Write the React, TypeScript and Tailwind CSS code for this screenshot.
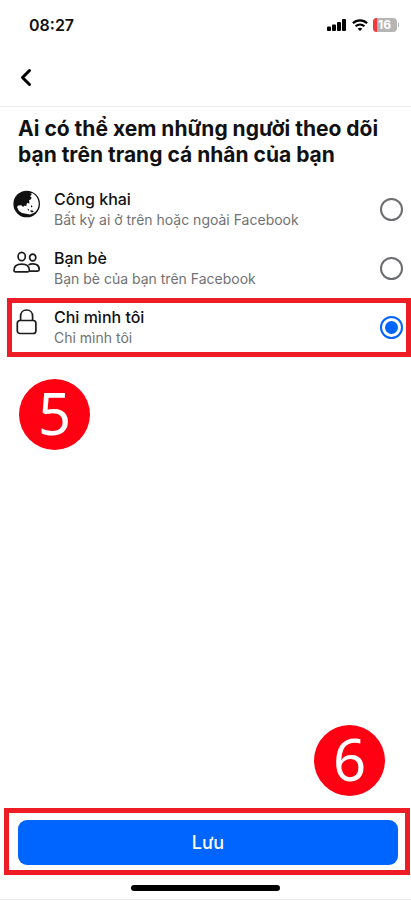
import React, { useState } from 'react';

const options = [
  {
    id: 'public',
    title: 'Công khai',
    description: 'Bất kỳ ai ở trên hoặc ngoài Facebook',
    icon: <GlobeIcon />,
  },
  {
    id: 'friends',
    title: 'Bạn bè',
    description: 'Bạn bè của bạn trên Facebook',
    icon: <FriendsIcon />,
  },
  {
    id: 'only-me',
    title: 'Chỉ mình tôi',
    description: 'Chỉ mình tôi',
    icon: <LockIcon />,
  },
];

function GlobeIcon() {
  return (
    <svg width="28" height="28" viewBox="0 0 28 28" fill="none" aria-hidden="true">
      <circle cx="13.700" cy="14" r="13.300" fill="#111" />
      <path
        d="M17.500 3.500l2.200-.2C23.500 5.500 25.700 9.500 25.700 14c0 4-2 7.200-5 9l-3.700 1.400-4-.6-4-.8-3-2L4 17l1.200-1.500 3.200-.3 1.600 1.800 1.700-1.500 1.500.7.8-3.200 2.500.4-.4-3.200 1.600-.6 1-1.900-1.700-1.400 1.700-1.500z"
        fill="#fff"
      />
      <path
        d="M17.700 16l1.200-.8.5 1.600-1.100.7zM14.600 18.500l1.300.8.2 1.200-1.200-.3zM17.500 20.200l2.200.2 1 1.400-1.700.6-1.500-.9z"
        fill="#111"
      />
    </svg>
  );
}

function FriendsIcon() {
  return (
    <svg width="28" height="28" viewBox="0 0 28 28" fill="none" stroke="#1c1c1c" strokeWidth="1.700" aria-hidden="true">
      <ellipse cx="8.700" cy="7.500" rx="3.600" ry="4.200" />
      <ellipse cx="19.700" cy="8.500" rx="3.100" ry="3.400" />
      <path d="M1 21.300c0-3.800 2.700-6.200 7.700-6.200s7.700 2.400 7.700 6.200c0 1-.5 1.600-1.600 1.600H2.600C1.500 22.900 1 22.300 1 21.300z" />
      <path d="M15.500 15.800c1.200-.6 2.500-.9 4.200-.9 4.400 0 6.500 2.400 6.500 5.600 0 1-.5 1.600-1.600 1.600h-8.200" />
    </svg>
  );
}

function LockIcon() {
  return (
    <svg width="28" height="28" viewBox="0 0 28 28" fill="none" stroke="#1c1c1c" strokeWidth="1.700" aria-hidden="true">
      <rect x="4.300" y="12.500" width="18.600" height="13" rx="2.800" />
      <path d="M7.600 12.500V8.300C7.600 4.500 10 2 13.600 2s6 2.500 6 6.300v4.200" />
    </svg>
  );
}

function SignalIcon() {
  return (
    <svg width="20" height="12" viewBox="0 0 20 12" aria-hidden="true">
      <rect x="0" y="7.500" width="4" height="4.500" rx="1" />
      <rect x="5" y="5.500" width="4" height="6.500" rx="1" />
      <rect x="10" y="3" width="4" height="9" rx="1" />
      <rect x="15" y="0" width="4" height="12" rx="1" />
    </svg>
  );
}

function WifiIcon() {
  return (
    <svg width="16" height="12" viewBox="0 0 16 12" fill="none" stroke="#000" strokeWidth="2.200" aria-hidden="true">
      <path d="M.9 4.300c4-4 10.200-4 14.200 0M3.600 7.300c2.600-2.400 6.200-2.400 8.800 0" />
      <path d="M8 12L5.700 9.700c1.300-1.200 3.300-1.200 4.600 0z" fill="#000" stroke="none" />
    </svg>
  );
}

function StatusBar() {
  return (
    <div className="flex h-[50px] items-center justify-between pr-3 pl-[29px]">
      <span className="text-base font-semibold">08:27</span>
      <div className="flex items-center gap-[5px]">
        <SignalIcon />
        <WifiIcon />
        <div className="flex items-center">
          <div className="flex h-[14px] w-6 items-center overflow-hidden rounded bg-[#b5b5b5]">
            <span className="h-full w-1 bg-[#f03a3e]" />
            <span className="pl-px text-xs font-bold text-white">16</span>
          </div>
          <span className="ml-px h-1 w-px bg-[#b5b5b5]" />
        </div>
      </div>
    </div>
  );
}

function StepBadge({ step }: { step: number }) {
  return (
    <span className="flex size-[71px] items-center justify-center rounded-full bg-[#ff0013] pb-1 font-['Noto_Sans',sans-serif] text-[58px] leading-none text-white">
      {step}
    </span>
  );
}

export default function App() {
  const [selected, setSelected] = useState('only-me');

  return (
    <div className="flex min-h-screen flex-col border-b border-[#ededed] bg-white font-[Inter,sans-serif] text-[#111]">
      <StatusBar />

      {/* Header */}
      <header className="flex h-[57px] items-center border-b border-[#ededed] pl-[19px]">
        <button type="button" aria-label="Quay lại">
          <svg width="14" height="20" viewBox="0 0 14 20" fill="none" stroke="#000" strokeWidth="3" strokeLinecap="round" strokeLinejoin="round">
            <path d="M10.500 2.500L3.500 9.500l7 7" />
          </svg>
        </button>
      </header>

      <main className="flex flex-1 flex-col">
        <h1 className="px-[18px] pt-[9px] pb-3 text-[21px] leading-[26px] font-bold">
          Ai có thể xem những người theo dõi bạn trên trang cá nhân của bạn
        </h1>

        {/* Audience options */}
        <div role="radiogroup" aria-label="Ai có thể xem những người theo dõi">
          {options.map((option) => (
            <label key={option.id} className="relative flex h-[59px] items-center pr-2 pl-[13px]">
              <span className="mb-3">{option.icon}</span>
              <span className="ml-[13px] flex-1 pb-[2px]">
                <span className="block text-base leading-[22px] font-medium">{option.title}</span>
                <span className="block text-sm leading-5 text-[#707275]">{option.description}</span>
              </span>
              <input
                type="radio"
                name="audience"
                checked={selected === option.id}
                onChange={() => setSelected(option.id)}
                className="size-[23px] appearance-none rounded-full border-2 border-[#6b6d70] checked:border-[#0064ff] checked:bg-[#0064ff] checked:bg-clip-content checked:p-[3px]"
              />
              {option.id === 'only-me' && (
                <span className="pointer-events-none absolute inset-y-0 right-0 left-[7px] border-5 border-[#ee1c25]" />
              )}
            </label>
          ))}
        </div>

        <div className="mt-[22px] ml-[19px]">
          <StepBadge step={5} />
        </div>
        <div className="mt-auto mr-[26px] mb-3 self-end">
          <StepBadge step={6} />
        </div>
      </main>

      {/* Save */}
      <footer>
        <div className="mr-px ml-1 border-5 border-[#ee1c25] pt-[7px] pr-[7px] pb-[5px] pl-[9px]">
          <button type="button" className="h-[45px] w-full rounded-[9px] bg-[#0064ff] text-lg font-medium text-white">
            Lưu
          </button>
        </div>
        <div className="mx-auto mt-[10px] mb-2 h-[6px] w-[149px] rounded-full bg-black" />
      </footer>
    </div>
  );
}
